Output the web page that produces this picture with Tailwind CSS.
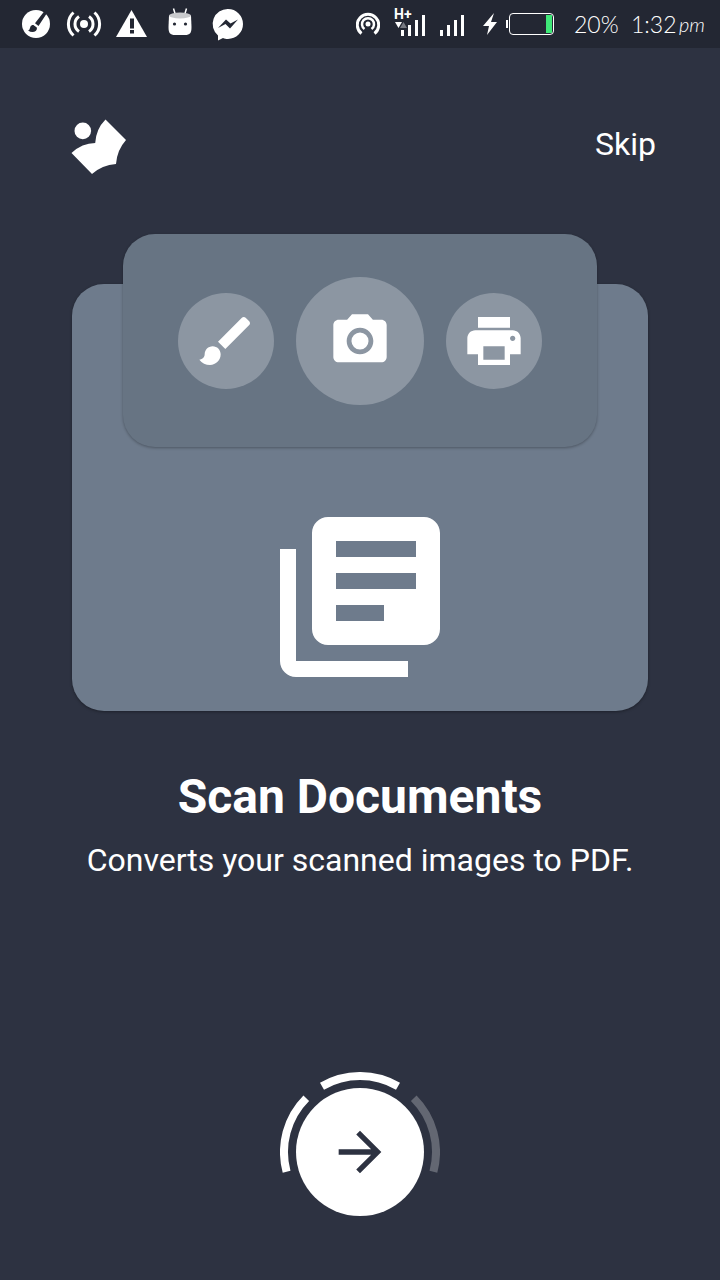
<!DOCTYPE html>
<html lang="en">
<head>
<meta charset="utf-8">
<meta name="viewport" content="width=device-width, initial-scale=1">
<title>Scan Documents</title>
<script src="https://cdn.jsdelivr.net/npm/@tailwindcss/browser@4"></script>
</head>
<body class="flex min-h-screen flex-col bg-[#2d3241] font-['Roboto',sans-serif] text-white">
<div class="flex h-12 items-center justify-between bg-[#232733] pr-4 pl-5">
  <div class="flex items-center gap-4">
    <svg class="size-8" viewBox="0 0 32 32" fill="white" aria-hidden="true"><circle cx="16" cy="16" r="14"/><path fill="#232733" d="M27 5 18.500 18l-3.500-2.700L24.500 3zM13.500 17l3.500 2.800c0 3-2 4.200-4.500 4.200-1.500 0-3-.5-4.500-1.500 2-.5 1.500-2 2.500-4 .7-1.200 1.800-1.700 3-1.500z"/><path stroke="white" stroke-width="1" d="m13.800 16.200 3.800 3"/></svg>
    <svg class="size-8 overflow-visible" viewBox="0 0 32 32" fill="none" stroke="white" stroke-width="3" aria-hidden="true"><circle cx="16" cy="16" r="4" fill="white" stroke="none"/><path d="M11 8.500a9 9 0 0 0 0 15M21 8.500a9 9 0 0 1 0 15M5.500 4.500a15.500 15.500 0 0 0 0 23M26.500 4.500a15.500 15.500 0 0 1 0 23"/></svg>
    <svg class="size-8" viewBox="0 0 32 32" aria-hidden="true"><path fill="white" d="M15.500 2 31 29H0z"/><path fill="#232733" d="M14 10.500h4v10h-4zM14 22h4v3.500h-4z"/></svg>
    <svg class="size-8" viewBox="0 0 32 32" aria-hidden="true"><path stroke="white" stroke-width="1.500" d="m9.500 .5 1.500 5M22.500 .5l-1.500 5"/><path fill="white" d="M5 7.500h22l.5 11.500c0 6-1.500 8-6.500 8H11c-5 0-6.500-2-6.500-8z"/><ellipse cx="16" cy="7.500" rx="11" ry="3" fill="#c9cacd"/><circle cx="10.500" cy="16" r="1.600" fill="#232733"/><circle cx="21.500" cy="16" r="1.600" fill="#232733"/></svg>
    <svg class="size-8 overflow-visible" viewBox="0 0 32 32" aria-hidden="true"><path fill="white" d="M16 1a15 15 0 0 1 0 30c-2 0-3.500-.3-5-1l-5 2.500v-5A15 15 0 0 1 16 1z"/><path fill="#232733" d="m6 20 8-8.500 4.500 4 7.500-4-8 9-4.500-4.500z"/></svg>
  </div>
  <div class="flex items-center">
    <svg class="size-6" viewBox="0 0 24 24" fill="none" stroke="white" stroke-width="3" aria-hidden="true"><circle cx="12" cy="12" r="2.500" fill="white" stroke="none"/><path d="M5.500 21.500a10.700 10.700 0 1 1 13 0"/><path stroke-width="2.500" d="M8.500 17a6 6 0 1 1 7 0"/></svg>
    <div class="relative ml-3 h-8 w-9">
      <svg class="h-8 w-9" viewBox="0 0 36 32" aria-hidden="true"><path fill="white" d="M3 14h7l-3.500 6z"/><path fill="#777a82" d="M8 20h7l-3.500-6z"/><path stroke="white" stroke-width="3" d="M10.500 22v6M17.500 17v11M24.500 12v16M31.500 7v21"/></svg>
      <span class="absolute -top-1 left-0.5 text-sm font-bold">H+</span>
    </div>
    <svg class="ml-2.5 h-8 w-7" viewBox="0 0 28 32" aria-hidden="true"><path stroke="white" stroke-width="3" d="M3.500 22v6M10.500 17v11M17.500 12v16M24.500 7v21"/></svg>
    <svg class="ml-4 h-6 w-4" viewBox="0 0 16 24" fill="white" aria-hidden="true"><path d="M12 1 1 14h6L5 23 15 10H9z"/></svg>
    <div class="ml-2 h-2 w-0.5 bg-white"></div>
    <div class="ml-px flex h-[22px] w-[45px] justify-end rounded-sm border border-white p-px"><div class="w-1.5 bg-[#3fe878]"></div></div>
    <span class="ml-5 w-[57px] font-['Lato',sans-serif] text-[23px] font-light">20%</span>
    <span class="w-[46px] font-['Lato',sans-serif] text-[23px] font-light">1:32</span>
    <span class="w-[27px] pl-0.5 font-['Lato',sans-serif] text-xl font-light italic">pm</span>
  </div>
</div>
<header class="mx-16 mt-16 flex h-16 items-center justify-between pl-1">
  <svg class="size-16" viewBox="0 0 64 64" fill="white" role="img" aria-label="Logo"><circle cx="14.800" cy="18.900" r="8.300"/><path d="M37.500 7.500 58 28q-9 10-10 24-14 1-24 10L3.500 41Q14 31 27.200 31 28 17 37.500 7.500z"/></svg>
  <button type="button" class="text-[32px] leading-10">Skip</button>
</header>
<main class="mx-[72px] mt-[108px]">
  <div class="flow-root rounded-4xl bg-[#6e7b8c] pb-[18px] shadow-[0_1px_3px_rgba(0,0,0,0.35)]">
    <div class="mx-[51px] -mt-[50px] flex h-[213px] items-center justify-center gap-[22px] rounded-4xl bg-[#677483] shadow-[0_1px_3px_rgba(0,0,0,0.3)]">
      <div class="grid size-24 place-items-center rounded-full bg-[#8c96a2]"><svg class="size-16" viewBox="0 0 24 24" fill="white" aria-hidden="true"><path d="M7 14c-1.660 0-3 1.340-3 3 0 1.310-1.160 2-2 2 .92 1.220 2.490 2 4 2 2.210 0 4-1.790 4-4 0-1.660-1.340-3-3-3zm13.710-9.370l-1.340-1.340c-.39-.39-1.020-.39-1.410 0L9 12.250 11.750 15l8.960-8.960c.39-.39.39-1.020 0-1.410z"/></svg></div>
      <div class="grid size-32 place-items-center rounded-full bg-[#8c96a2]"><svg class="size-16" viewBox="0 0 24 24" fill="white" aria-hidden="true"><circle cx="12" cy="12" r="3.200"/><path d="M9 2L7.170 4H4c-1.100 0-2 .9-2 2v12c0 1.100.9 2 2 2h16c1.100 0 2-.9 2-2V6c0-1.100-.9-2-2-2h-3.170L15 2H9zm3 15c-2.760 0-5-2.240-5-5s2.240-5 5-5 5 2.240 5 5-2.240 5-5 5z"/></svg></div>
      <div class="grid size-24 place-items-center rounded-full bg-[#8c96a2]"><svg class="size-16" viewBox="0 0 24 24" fill="white" aria-hidden="true"><path d="M19 8H5c-1.660 0-3 1.340-3 3v6h4v4h12v-4h4v-6c0-1.660-1.340-3-3-3zm-3 11H8v-5h8v5zm3-7c-.55 0-1-.45-1-1s.45-1 1-1 1 .45 1 1-.45 1-1 1zm-1-9H6v4h12V3z"/></svg></div>
    </div>
    <svg class="mx-auto mt-[54px] size-48" viewBox="0 0 24 24" fill="white" aria-hidden="true"><path d="M4 6H2v14c0 1.100.9 2 2 2h14v-2H4V6zm16-4H8c-1.100 0-2 .9-2 2v12c0 1.100.9 2 2 2h12c1.100 0 2-.9 2-2V4c0-1.100-.9-2-2-2zm-1 9H9V9h10v2zm-4 4H9v-2h6v2zm4-8H9V5h10v2z"/></svg>
  </div>
  <h1 class="mt-14 text-center text-5xl leading-[60px] font-bold">Scan Documents</h1>
  <p class="mt-[13px] text-center text-[32px] leading-10">Converts your scanned images to PDF.</p>
</main>
<footer class="mt-auto flex justify-center pb-12">
  <button type="button" aria-label="Next" class="size-40">
    <svg class="size-40" viewBox="0 0 160 160" aria-hidden="true"><g fill="none" stroke="white" stroke-width="8"><path d="M6.590 99.670A76 76 0 0 1 26.260 26.260"/><path d="M42 14.180A76 76 0 0 1 118 14.180"/><path stroke="#636772" d="M133.740 26.260A76 76 0 0 1 153.410 99.670"/></g><circle cx="80" cy="80" r="64" fill="white"/><path fill="#2d3241" transform="translate(48 48) scale(2.6667)" d="M12 4l-1.410 1.410L16.170 11H4v2h12.170l-5.580 5.590L12 20l8-8z"/></svg>
  </button>
</footer>
</body>
</html>
